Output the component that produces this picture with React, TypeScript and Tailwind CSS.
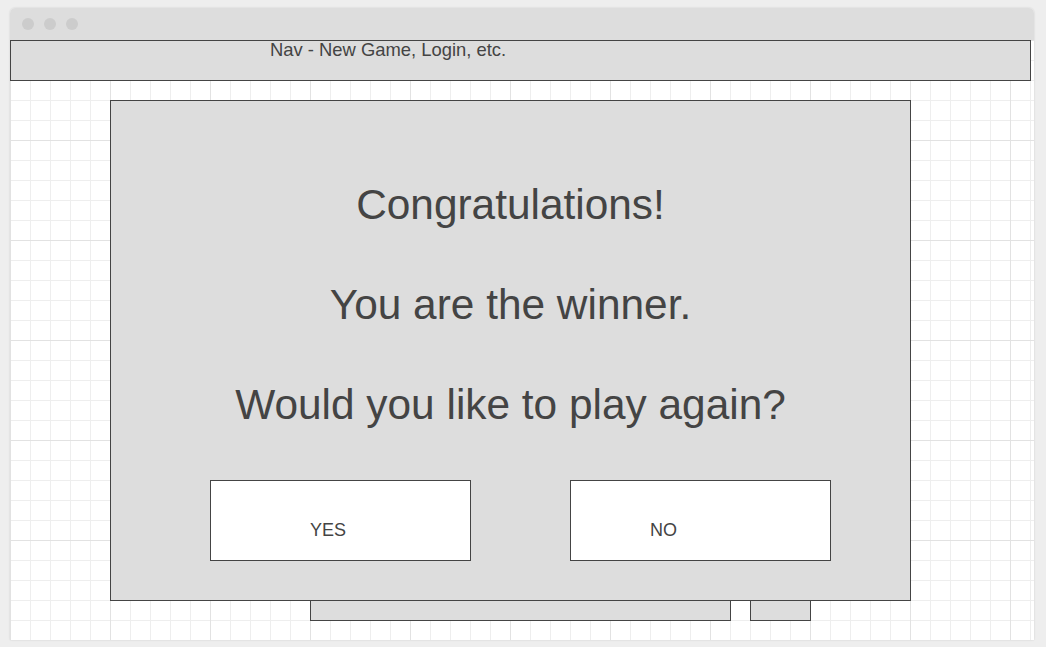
export default function App() {
  return (
    <div className="h-[647px] w-full bg-[#eeeeee] pl-[10px] pt-[8px] font-['Liberation_Sans',Arial,sans-serif] text-[#444444]">
      <div className="flex h-[632px] w-[1024px] flex-col overflow-hidden rounded-t-[5px] bg-white shadow-[0_0_2px_rgba(0,0,0,0.15)]">
        {/* title bar */}
        <div className="flex h-[32px] shrink-0 items-center gap-[10px] bg-[#dddddd] pl-[12px]">
          <span className="h-[12px] w-[12px] rounded-full bg-[#cccccc]" />
          <span className="h-[12px] w-[12px] rounded-full bg-[#cccccc]" />
          <span className="h-[12px] w-[12px] rounded-full bg-[#cccccc]" />
        </div>

        {/* canvas */}
        <div className="relative flex-1 bg-[linear-gradient(to_right,#e2e2e2_1px,transparent_1px),linear-gradient(to_bottom,#e2e2e2_1px,transparent_1px),linear-gradient(to_right,#eeeeee_1px,transparent_1px),linear-gradient(to_bottom,#eeeeee_1px,transparent_1px)] bg-[size:100px_100px,100px_100px,20px_20px,20px_20px]">
          <div className="h-[41px] w-[1021px] border border-[#444444] bg-[#dddddd] pl-[259px] text-[18.4px] leading-[18px]">
            Nav - New Game, Login, etc.
          </div>

          {/* panels behind the dialog */}
          <div className="absolute left-[300px] top-[500px] h-[81px] w-[421px] border border-[#444444] bg-[#dddddd]" />
          <div className="absolute left-[740px] top-[500px] h-[81px] w-[61px] border border-[#444444] bg-[#dddddd]" />

          {/* dialog */}
          <div className="absolute left-[100px] top-[60px] flex h-[501px] w-[801px] flex-col items-center border border-[#444444] bg-[#dddddd] pt-[54px]">
            <p className="h-[100px] text-[42.4px] leading-[100px]">Congratulations!</p>
            <p className="h-[100px] text-[42.4px] leading-[100px]">You are the winner.</p>
            <p className="h-[100px] text-[42.4px] leading-[100px]">Would you like to play again?</p>
            <div className="mt-[25px] flex w-full pl-[99px]">
              <div className="h-[81px] w-[261px] border border-[#444444] bg-white pl-[99px] pt-[40px] text-[18px] leading-[18px]">
                YES
              </div>
              <div className="ml-[99px] h-[81px] w-[261px] border border-[#444444] bg-white pl-[79px] pt-[40px] text-[18px] leading-[18px]">
                NO
              </div>
            </div>
          </div>
        </div>
      </div>
    </div>
  );
}
